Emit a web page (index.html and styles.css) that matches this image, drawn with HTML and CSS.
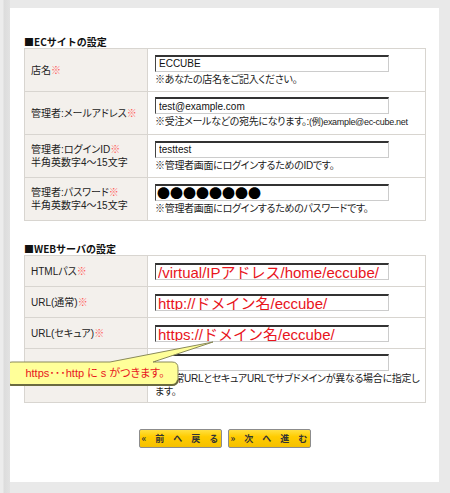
FILE: index.html
```html
<!DOCTYPE html>
<html lang="ja">
<head>
    <meta charset="UTF-8">
    <title>ECサイトの設定</title>
    <link rel="stylesheet" href="styles.css">
</head>
<body>
    <div class="page">
        <h2 class="section-title">■ECサイトの設定</h2>
        <table class="setting-table">
            <tr>
                <th>店名<span class="required">※</span></th>
                <td>
                    <input type="text" class="field" value="ECCUBE">
                    <p class="note">※あなたの店名をご記入ください。</p>
                </td>
            </tr>
            <tr>
                <th>管理者:メールアドレス<span class="required">※</span></th>
                <td>
                    <input type="text" class="field" value="test@example.com">
                    <p class="note">※受注メールなどの宛先になります。:<span class="small">(例)example@ec-cube.net</span></p>
                </td>
            </tr>
            <tr>
                <th>管理者:ログインID<span class="required">※</span><br>半角英数字4〜15文字</th>
                <td>
                    <input type="text" class="field" value="testtest">
                    <p class="note">※管理者画面にログインするためのIDです。</p>
                </td>
            </tr>
            <tr>
                <th>管理者:パスワード<span class="required">※</span><br>半角英数字4〜15文字</th>
                <td>
                    <input type="text" class="field password" value="●●●●●●●●">
                    <p class="note">※管理者画面にログインするためのパスワードです。</p>
                </td>
            </tr>
        </table>

        <h2 class="section-title web">■WEBサーバの設定</h2>
        <table class="setting-table server">
            <tr>
                <th>HTMLパス<span class="required">※</span></th>
                <td><input type="text" class="field big" value="/virtual/IPアドレス/home/eccube/"></td>
            </tr>
            <tr>
                <th>URL(通常)<span class="required">※</span></th>
                <td><input type="text" class="field big" value="http://ドメイン名/eccube/"></td>
            </tr>
            <tr>
                <th>URL(セキュア)<span class="required">※</span></th>
                <td><input type="text" class="field big" value="https://ドメイン名/eccube/"></td>
            </tr>
            <tr class="last-row">
                <th></th>
                <td>
                    <input type="text" class="field" value="">
                    <p class="note">※通常URLとセキュアURLでサブドメインが異なる場合に指定します。</p>
                </td>
            </tr>
        </table>

        <div class="balloon">
            <svg width="212" height="48" viewBox="0 0 212 48">
                <path d="M8 22 H106 L209 2 L149 22 H168 Q174 22 174 28 V39 Q174 45 168 45 H8 Q2 45 2 39 V28 Q2 22 8 22 Z"
                      fill="#ffff99" stroke="#8a8a5a" stroke-width="1"/>
                <path d="M3 40 Q4 45 8 45 H168 Q173 45 174 40" fill="none" stroke="#6b6b40" stroke-width="2"/>
            </svg>
            <span class="balloon-text">https･･･http に s がつきます。</span>
        </div>

        <div class="buttons">
            <button class="nav-button">«　前　へ　戻　る</button>
            <button class="nav-button">»　次　へ　進　む</button>
        </div>
    </div>
</body>
</html>
```

FILE: styles.css
```css
html, body {
    margin: 0;
    padding: 0;
}
body {
    width: 450px;
    height: 493px;
    background: linear-gradient(to right, #ececec 0, #ececec 3px, #dcdcdc 4px, #e2e2e2 10px, #e9e9e9 10px);
    font-family: "Liberation Sans", "Noto Sans CJK JP", sans-serif;
    font-size: 10px;
    color: #222;
    font-feature-settings: "palt";
    overflow: hidden;
}
.page {
    position: relative;
    margin: 8px 11px 0 10px;
    height: 474px;
    background-color: #fff;
    padding: 0 0 0 14px;
    box-sizing: border-box;
    overflow: hidden;
}
.section-title {
    margin: 0;
    padding-top: 28px;
    height: 12px;
    line-height: 12px;
    font-family: "Noto Sans CJK JP", sans-serif;
    font-feature-settings: normal;
    font-size: 10px;
    font-weight: bold;
    color: #111;
}
.section-title.web {
    padding-top: 22px;
}
.setting-table {
    width: 402px;
    border-collapse: collapse;
    table-layout: fixed;
}
.setting-table th,
.setting-table td {
    border: 1px solid #d8d5d0;
    text-align: left;
    vertical-align: middle;
    font-weight: normal;
}
.setting-table th {
    width: 110px;
    padding: 0 6px;
    height: 42px;
    background-color: #f3f0ec;
    line-height: 13px;
    color: #222;
}
.setting-table td {
    padding: 0 0 0 7px;
}
.server th {
    height: 30px;
}
.server .last-row th {
    height: 53px;
}
.required {
    color: #ff5a5a;
}
.field {
    display: block;
    box-sizing: border-box;
    width: 234px;
    height: 17px;
    margin: 0;
    padding: 0 3px;
    border-top: 2px solid #333;
    border-left: 1px solid #444;
    border-right: 1px solid #ccc;
    border-bottom: 1px solid #ccc;
    font-family: "Liberation Sans", "Noto Sans CJK JP", sans-serif;
    font-size: 10px;
    color: #111;
    background: #fff;
}
.field.password {
    font-family: "Noto Sans CJK JP", sans-serif;
    font-size: 13px;
    line-height: 14px;
    padding: 0 1px;
    color: #000;
}
.field.big {
    font-size: 15px;
    color: #e8141c;
    padding: 0 2px;
}
.note {
    margin: 1px 0 0;
    line-height: 13px;
    letter-spacing: -0.3px;
}
.small {
    font-size: 9px;
    letter-spacing: -0.3px;
}
.balloon {
    position: absolute;
    left: -6px;
    top: 332px;
    width: 212px;
    height: 48px;
}
.balloon svg {
    display: block;
}
.balloon-text {
    position: absolute;
    left: 8px;
    top: 26px;
    width: 166px;
    text-align: center;
    font-size: 11px;
    line-height: 14px;
    color: #e8141c;
}
.buttons {
    display: flex;
    justify-content: center;
    gap: 6px;
    margin-top: 26px;
    padding-right: 14px;
}
.nav-button {
    width: 83px;
    height: 19px;
    padding: 0;
    border: 1px solid #8c8c8c;
    border-radius: 2px;
    background: linear-gradient(#ffe040, #ffcc00 40%, #f5c000);
    font-family: "Noto Sans CJK JP", sans-serif;
    font-size: 9px;
    font-weight: bold;
    color: #333;
    line-height: 17px;
    cursor: pointer;
}
```
